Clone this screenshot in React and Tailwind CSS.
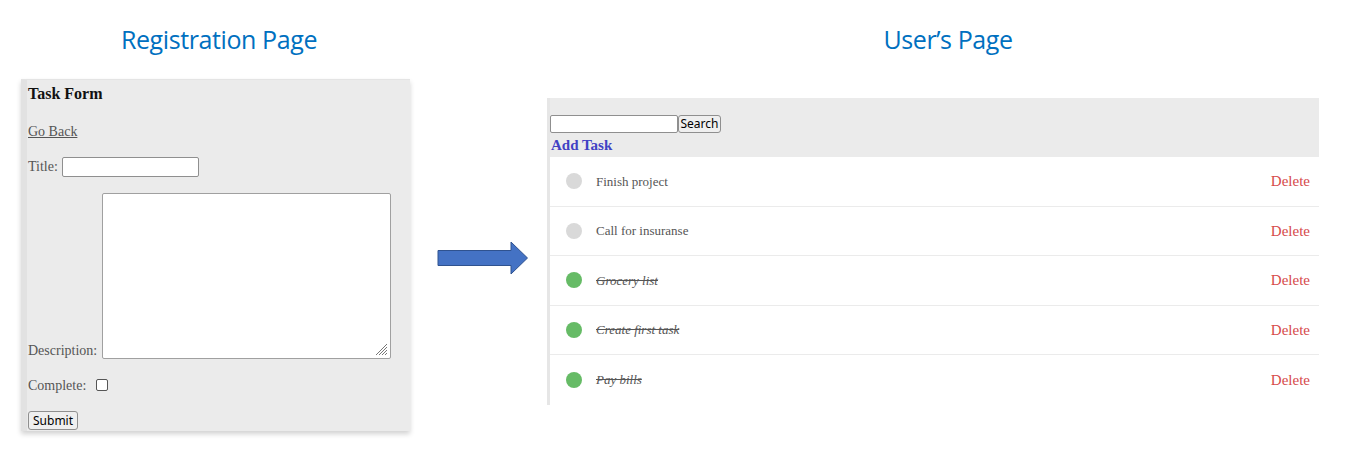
import React from "react";

const serif = { fontFamily: '"Liberation Serif", "DejaVu Serif", serif' };

const tasks = [
  { title: "Finish project", done: false },
  { title: "Call for insuranse", done: false },
  { title: "Grocery list", done: true },
  { title: "Create first task", done: true },
  { title: "Pay bills", done: true },
];

const Heading = ({ children, className }) => (
  <div
    className={`h-[79px] flex items-center justify-center text-[25px] text-[#0070c0] ${className}`}
    style={{ fontFamily: '"Open Sans", "Noto Sans", sans-serif', letterSpacing: "-0.4px" }}
  >
    {children}
  </div>
);

const Arrow = () => (
  <svg width="92" height="35" viewBox="0 0 92 35">
    <path
      d="M1 9.5 H74 V1 L90.5 17 L74 33 V24.5 H1 Z"
      fill="#4472c4"
      stroke="#2f528f"
      strokeWidth="1"
    />
  </svg>
);

const TaskForm = () => (
  <div
    className="w-[389px] h-[352px] bg-[#ebebeb] border-l-[6px] border-[#e2e2e2] border-t border-t-[#e4e4e4] pl-[1px] pt-[4px] text-[14px] text-[#555] shadow-[0_3px_5px_rgba(0,0,0,0.18)]"
    style={serif}
  >
    <div className="h-[20px] leading-[20px] text-[16px] font-bold text-[#111]">Task Form</div>
    <div className="mt-[18px] h-[20px] leading-[20px]">
      <span className="underline">Go Back</span>
    </div>
    <div className="mt-[14px] flex items-center gap-[4px]">
      <span>Title:</span>
      <div className="w-[137px] h-[20px] bg-white border border-[#8f8f8f] rounded-[2px]" />
    </div>
    <div className="mt-[16px] flex items-end gap-[5px]">
      <span className="leading-[16px]">Description:</span>
      <div className="relative w-[289px] h-[166px] bg-white border border-[#a0a0a0] rounded-[2px]">
        <svg className="absolute right-[2px] bottom-[2px]" width="12" height="12" viewBox="0 0 12 12">
          <path d="M11 3 L3 11 M11 6 L6 11 M11 9 L9 11 M11 0 L0 11" stroke="#777" strokeWidth="1" />
        </svg>
      </div>
    </div>
    <div className="mt-[18px] h-[16px] flex items-center gap-[10px]">
      <span>Complete:</span>
      <span className="w-[12px] h-[12px] bg-white border border-[#555] rounded-[2px]" />
    </div>
    <div className="mt-[17px]">
      <button
        className="h-[19px] px-[4px] text-[12px] leading-[17px] text-black bg-[#efefef] border border-[#8f8f8f] rounded-[3px]"
        style={{ fontFamily: '"Noto Sans", "Open Sans", sans-serif' }}
      >
        Submit
      </button>
    </div>
  </div>
);

const TaskList = () => (
  <div className="w-[772px] border-l-[3px] border-[#e6e6e6]" style={serif}>
    <div className="h-[59px] bg-[#ebebeb] pt-[17px]">
      <div className="flex">
        <div className="w-[128px] h-[18px] bg-white border border-[#8f8f8f] rounded-[2px]" />
        <button
          className="w-[43px] h-[18px] text-[12px] leading-[16px] text-black bg-[#efefef] border border-[#8f8f8f] rounded-[3px]"
          style={{ fontFamily: '"Noto Sans", "Open Sans", sans-serif' }}
        >
          Search
        </button>
      </div>
      <div className="h-[24px] leading-[24px] pl-[1px] text-[15px] font-bold text-[#4141c4]">Add Task</div>
    </div>
    {tasks.map((t, i) => (
      <div
        key={t.title}
        className={`h-[49.5px] flex items-center pl-[16px] pr-[9px] ${i < tasks.length - 1 ? "border-b border-[#ebebeb]" : ""}`}
      >
        <span className={`w-[16px] h-[16px] rounded-full ${t.done ? "bg-[#66bb66]" : "bg-[#d9d9d9]"}`} />
        <span className={`ml-[14px] text-[13px] text-[#555] ${t.done ? "italic line-through" : ""}`}>{t.title}</span>
        <span className="ml-auto text-[15px] text-[#d64a4a]">Delete</span>
      </div>
    ))}
  </div>
);

export default function App() {
  return (
    <div className="w-[1350px] h-[450px] bg-white flex overflow-hidden">
      <div className="w-[410px] pl-[21px] flex flex-col">
        <Heading className="pl-[7px]">Registration Page</Heading>
        <TaskForm />
      </div>
      <div className="ml-[27px] mt-[241px]">
        <Arrow />
      </div>
      <div className="ml-[18px] flex flex-col">
        <Heading className="pl-[30px] h-[79px]">User’s Page</Heading>
        <div className="h-[19px]" />
        <TaskList />
      </div>
    </div>
  );
}
